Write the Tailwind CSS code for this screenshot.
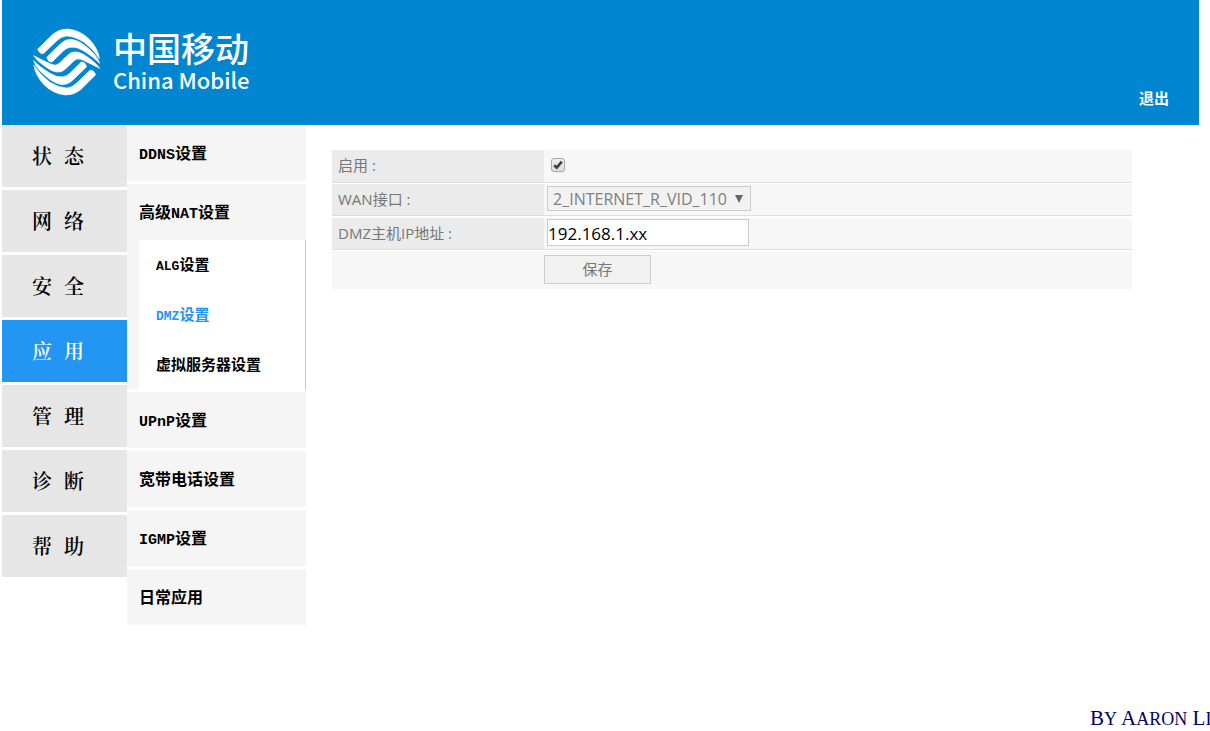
<!DOCTYPE html>
<html lang="zh-CN">
<head>
<meta charset="utf-8">
<title>DMZ设置</title>
<script src="https://cdn.jsdelivr.net/npm/@tailwindcss/browser@4"></script>
</head>
<body class="flex min-h-screen flex-col overflow-x-hidden bg-white pl-0.5 font-['Open_Sans','Noto_Sans_CJK_SC',sans-serif]">
<header class="mr-[11px] flex h-[125px] justify-between bg-[#0086d1] text-white">
  <div class="flex items-start gap-2 pt-[25px] pl-7">
    <svg class="h-[75px] w-[75px]" viewBox="0 0 225 225" fill="white" stroke="white" stroke-width="2" stroke-linejoin="round" aria-hidden="true">
      <defs>
        <g id="half">
          <path d="M23 73L68 28Q88 12 112 12Q150 15 178 43Q205 72 208 101Q190 72 160 50Q132 33 110 33Q95 34 82 46L40 86Q29 88 23 73Z"/>
          <path d="M50 97L92 56Q106 43 122 43Q145 45 170 66Q202 92 209 115Q192 97 160 77Q137 63 120 67Q110 69 102 76L66 111Q55 113 50 97Z"/>
        </g>
      </defs>
      <use href="#half"/>
      <use href="#half" transform="rotate(180 110 111)"/>
      <path d="M209 130Q198 112 160 88Q138 76 122 84Q116 88 108 95L88 115Q78 124 64 118Q36 105 11 92Q22 110 60 134Q82 146 98 138Q104 134 112 127L132 107Q142 98 156 104Q184 117 209 130Z"/>
    </svg>
    <div class="flex flex-col">
      <span class="font-['Noto_Sans_CJK_SC',sans-serif] text-[34px] leading-[46px] font-medium">中国移动</span>
      <span class="font-['Noto_Sans_CJK_SC',sans-serif] text-[22px] leading-4 font-medium">China Mobile</span>
    </div>
  </div>
  <a href="#" class="self-end pr-[30px] pb-4 font-['Liberation_Serif','Noto_Sans_CJK_SC',sans-serif] text-[15px] leading-5 font-bold">退出</a>
</header>
<main class="flex flex-1 items-start">
  <nav class="flex w-[125px] shrink-0 flex-col gap-[3px] font-['Noto_Serif_CJK_SC','Noto_Sans_CJK_SC',serif] text-[20px] font-semibold text-black" aria-label="主菜单">
    <a href="#" class="flex h-[62px] items-center gap-3 bg-[#e6e6e6] pl-[30px]"><span>状</span><span>态</span></a>
    <a href="#" class="flex h-[62px] items-center gap-3 bg-[#e6e6e6] pl-[30px]"><span>网</span><span>络</span></a>
    <a href="#" class="flex h-[62px] items-center gap-3 bg-[#e6e6e6] pl-[30px]"><span>安</span><span>全</span></a>
    <a href="#" class="flex h-[62px] items-center gap-3 bg-[#2395f3] pl-[30px] text-white" aria-current="page"><span>应</span><span>用</span></a>
    <a href="#" class="flex h-[62px] items-center gap-3 bg-[#e6e6e6] pl-[30px]"><span>管</span><span>理</span></a>
    <a href="#" class="flex h-[62px] items-center gap-3 bg-[#e6e6e6] pl-[30px]"><span>诊</span><span>断</span></a>
    <a href="#" class="flex h-[62px] items-center gap-3 bg-[#e6e6e6] pl-[30px]"><span>帮</span><span>助</span></a>
  </nav>
  <nav class="flex w-[179px] shrink-0 flex-col gap-[3px] font-['Liberation_Mono','Noto_Sans_CJK_SC',monospace] text-[16px] font-bold text-black" aria-label="应用">
    <a href="#" class="flex h-14 items-center bg-[#f5f5f5] pt-1 pl-3"><span><span class="text-[15px]">DDNS</span>设置</span></a>
    <div class="h-[205px] bg-[#f5f5f5]">
      <a href="#" class="flex h-14 items-center pt-1 pl-3"><span>高级<span class="text-[15px]">NAT</span>设置</span></a>
      <div class="ml-3 flex flex-col border-r border-[#ccc] bg-white text-[15px]">
        <a href="#" class="flex h-[50px] items-center pt-1 pl-[17px]"><span><span class="text-[13px]">ALG</span>设置</span></a>
        <a href="#" class="flex h-[50px] items-center pt-1 pl-[17px] text-[#2395f3]" aria-current="page"><span><span class="text-[13px]">DMZ</span>设置</span></a>
        <a href="#" class="flex h-[50px] items-center pt-1 pl-[17px]">虚拟服务器设置</a>
      </div>
    </div>
    <a href="#" class="flex h-14 items-center bg-[#f5f5f5] pt-1 pl-3"><span><span class="text-[15px]">UPnP</span>设置</span></a>
    <a href="#" class="flex h-14 items-center bg-[#f5f5f5] pt-1 pl-3">宽带电话设置</a>
    <a href="#" class="flex h-14 items-center bg-[#f5f5f5] pt-1 pl-3"><span><span class="text-[15px]">IGMP</span>设置</span></a>
    <a href="#" class="flex h-14 items-center bg-[#f5f5f5] pt-1 pl-3">日常应用</a>
  </nav>
  <form class="mt-[25px] mr-[78px] ml-[26px] flex flex-1 flex-col gap-px text-[15px] text-[#777]">
    <div class="flex h-[33px] border-b border-[#ddd] bg-[#f7f7f7]">
      <label for="enable" class="flex w-[212px] items-center bg-[#ebebeb] pb-0.5 pl-1.5">启用 :</label>
      <div class="flex items-center pb-0.5 pl-[7px]">
        <span class="relative flex h-3.5 w-3.5">
          <input id="enable" type="checkbox" checked class="h-3.5 w-3.5 appearance-none rounded-[3px] border border-[#aaa] bg-linear-to-b from-[#eee] to-[#ddd] shadow-xs">
          <svg class="pointer-events-none absolute inset-0 h-3.5 w-3.5" viewBox="0 0 14 14" fill="none" stroke="#404040" stroke-width="2.6" aria-hidden="true"><path d="M3.2 7.3L5.7 9.6L10.8 3.6"/></svg>
        </span>
      </div>
    </div>
    <div class="flex h-[32px] border-b border-[#ddd] bg-[#f7f7f7]">
      <label for="wan" class="flex w-[212px] items-center bg-[#ebebeb] pl-1.5">WAN接口 :</label>
      <div class="relative flex items-center pb-0.5 pl-[3px]">
        <select id="wan" class="h-[25px] w-[204px] appearance-none overflow-hidden border border-[#ccc] bg-[#f2f2f2] pr-[22px] pl-[5px] text-[16px] text-[#808080]"><option>2_INTERNET_R_VID_1101</option></select>
        <svg class="pointer-events-none absolute right-2 h-2 w-2" viewBox="0 0 8 8" fill="#666" aria-hidden="true"><path d="M0 0H8L4 8Z"/></svg>
      </div>
    </div>
    <div class="mt-px flex h-[32px] border-b border-[#ddd] bg-[#f7f7f7]">
      <label for="ip" class="flex w-[212px] items-center bg-[#ebebeb] pl-1.5">DMZ主机IP地址 :</label>
      <div class="flex items-center pb-0.5 pl-[3px]">
        <input id="ip" type="text" value="192.168.1.xx" class="h-[27px] w-[202px] border border-[#ccc] bg-white pt-0.5 text-[17px] text-black">
      </div>
    </div>
    <div class="flex h-[38px] items-center bg-[#f7f7f7] pb-0.5 pl-[212px]">
      <button type="button" class="h-[29px] w-[107px] border border-[#ccc] bg-[#f1f1f1]">保存</button>
    </div>
  </form>
</main>
<footer class="flex h-[27px] shrink-0 justify-end overflow-hidden font-['Liberation_Serif',serif] text-[21px] leading-7 text-[#000066]">
  <p class="w-[120px] whitespace-nowrap">B<span class="text-[18px] uppercase">y</span> A<span class="text-[18px] uppercase">aron</span> L<span class="text-[18px] uppercase">i</span></p>
</footer>
</body>
</html>
